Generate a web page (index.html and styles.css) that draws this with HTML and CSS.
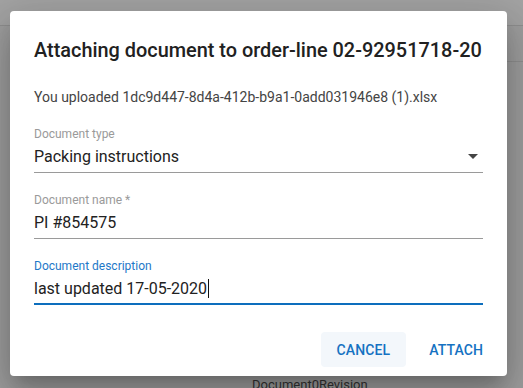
FILE: index.html
```html
<!DOCTYPE html>
<html>
<head>
    <title>Attach document</title>
    <meta charset="UTF-8">
    <link rel="stylesheet" href="styles.css">
</head>
<body>
    <div class="page">
        <div class="topbar"></div>
        <div class="rule-right"></div>
        <div class="footer-text">Document0Revision</div>
    </div>

    <div class="dialog">
        <h2 class="dialog-title">Attaching document to order-line 02-92951718-20</h2>
        <p class="upload-note">You uploaded 1dc9d447-8d4a-412b-b9a1-0add031946e8 (1).xlsx</p>

        <div class="field">
            <label class="field-label">Document type</label>
            <div class="field-input select">
                <span>Packing instructions</span>
                <svg class="arrow" width="10" height="5" viewBox="0 0 10 5"><path d="M0 0h10L5 5z" fill="#444"/></svg>
            </div>
        </div>

        <div class="field">
            <label class="field-label">Document name *</label>
            <div class="field-input">PI #854575</div>
        </div>

        <div class="field focused">
            <label class="field-label">Document description</label>
            <div class="field-input">last updated 17-05-2020<span class="caret"></span></div>
        </div>

        <div class="actions">
            <button class="btn btn-hover">Cancel</button>
            <button class="btn">Attach</button>
        </div>
    </div>
</body>
</html>
```

FILE: styles.css
```css
body {
    margin: 0;
    font-family: Roboto, "Liberation Sans", sans-serif;
    background-color: #9e9e9e;
    width: 523px;
    height: 388px;
    overflow: hidden;
    position: relative;
}
.page {
    height: 388px;
    position: relative;
}
.topbar {
    height: 25px;
    border-bottom: 1px solid #8f8f8f;
    background-color: #a3a3a3;
}
.rule-right {
    position: absolute;
    left: 507px;
    right: 0;
    top: 61px;
    border-top: 1px solid #8f8f8f;
}
.footer-text {
    position: absolute;
    left: 252px;
    top: 377px;
    font-size: 13px;
    color: #333;
}
.dialog {
    position: absolute;
    left: 10px;
    top: 11px;
    width: 497px;
    height: 365px;
    box-sizing: border-box;
    background: white;
    border-radius: 4px;
    box-shadow: 0 11px 15px -7px rgba(0,0,0,0.2), 0 24px 38px 3px rgba(0,0,0,0.14), 0 9px 46px 8px rgba(0,0,0,0.12);
    padding: 0 24px;
}
.dialog-title {
    margin: 0;
    padding-top: 27px;
    font-size: 19.9px;
    font-weight: 500;
    line-height: 26px;
    color: #212121;
    white-space: nowrap;
}
.upload-note {
    margin: 23px 0 0;
    font-size: 14px;
    line-height: 20px;
    color: #444;
}
.field {
    margin-top: 20px;
}
.field + .field {
    margin-top: 20px;
}
.field-label {
    display: block;
    font-size: 12px;
    line-height: 14px;
    color: #9a9a9a;
}
.field-input {
    display: flex;
    align-items: center;
    height: 31px;
    font-size: 16px;
    color: #222;
    border-bottom: 1px solid #9a9a9a;
}
.select {
    justify-content: space-between;
}
.arrow {
    margin-right: 5px;
}
.focused .field-label {
    color: #1e78c8;
}
.focused .field-input {
    border-bottom: 2px solid #0d6ebd;
    height: 30px;
}
.caret {
    display: inline-block;
    width: 1px;
    height: 19px;
    background: #111;
    margin-left: 1px;
}
.actions {
    display: flex;
    justify-content: flex-end;
    gap: 7px;
    margin-top: 27px;
    margin-right: -16px;
}
.btn {
    font-family: Roboto, "Liberation Sans", sans-serif;
    font-size: 14px;
    font-weight: 500;
    text-transform: uppercase;
    color: #1572c2;
    background: none;
    border: none;
    border-radius: 4px;
    height: 35px;
    padding: 0 16px;
    letter-spacing: 0.1px;
}
.btn-hover {
    background-color: #f3f7fb;
}
```
